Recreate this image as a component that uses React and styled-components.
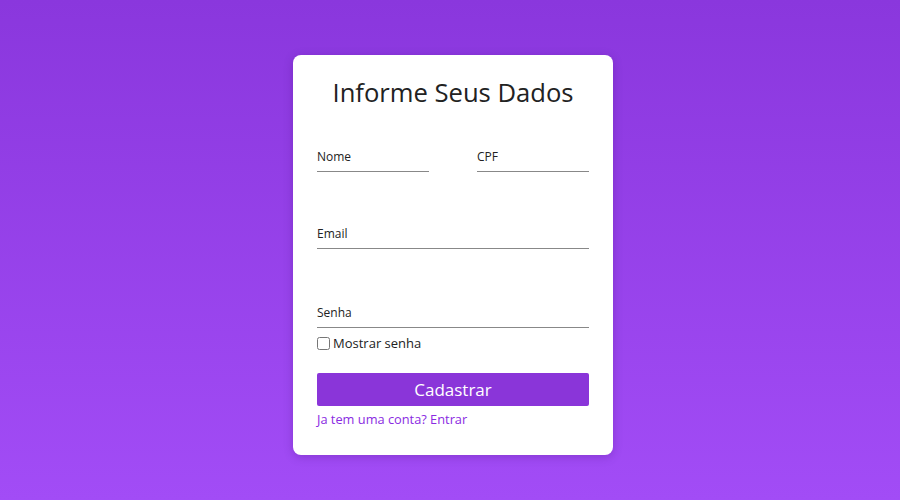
import React, { useState } from "react";
import styled, { createGlobalStyle } from "styled-components";

const GlobalStyle = createGlobalStyle`
  html, body {
    margin: 0;
    height: 100%;
  }
  body {
    font-family: "Open Sans", "Noto Sans", sans-serif;
    background: linear-gradient(180deg, #8a37dd 0%, #a24cf6 100%);
  }
  #root {
    height: 100%;
  }
`;

const Page = styled.div`
  height: 100%;
  box-sizing: border-box;
  padding: 10px 0 0 6px;
  display: flex;
  align-items: center;
  justify-content: center;
`;

const Card = styled.form`
  width: 320px;
  height: 400px;
  box-sizing: border-box;
  background: #fff;
  border-radius: 8px;
  padding: 20px 24px 0;
  box-shadow: 0 2px 10px rgba(60, 0, 110, 0.25);
`;

const Title = styled.h1`
  margin: 0;
  font-size: 25.6px;
  font-weight: 400;
  color: #222;
  text-align: center;
  line-height: 36px;
`;

const Row = styled.div`
  display: flex;
  gap: 48px;
  margin-top: ${(p) => p.top}px;
`;

const Input = styled.input`
  width: 100%;
  min-width: 0;
  box-sizing: border-box;
  border: none;
  border-bottom: 1px solid #888;
  outline: none;
  padding: 0 0 6px;
  font-family: inherit;
  font-size: 12px;
  color: #222;
  background: transparent;

  &::placeholder {
    color: #222;
  }
`;

const CheckLabel = styled.label`
  display: flex;
  align-items: center;
  gap: 3px;
  margin-top: 6px;
  font-size: 13px;
  color: #222;

  input {
    margin: 0;
    width: 13px;
    height: 13px;
  }
`;

const Button = styled.button`
  display: block;
  width: 100%;
  height: 33px;
  margin-top: 21px;
  border: none;
  border-radius: 2px;
  background: #8a35d9;
  color: #fff;
  font-family: inherit;
  font-size: 17px;
  cursor: pointer;
`;

const LoginLink = styled.a`
  display: inline-block;
  margin-top: 4px;
  font-size: 12.8px;
  color: #8a2be2;
  text-decoration: none;
`;

export default function App() {
  const [show, setShow] = useState(false);
  return (
    <Page>
      <GlobalStyle />
      <Card onSubmit={(e) => e.preventDefault()}>
        <Title>Informe Seus Dados</Title>
        <Row top={37}>
          <Input placeholder="Nome" />
          <Input placeholder="CPF" />
        </Row>
        <Row top={53}>
          <Input placeholder="Email" />
        </Row>
        <Row top={55}>
          <Input placeholder="Senha" type={show ? "text" : "password"} />
        </Row>
        <CheckLabel>
          <input
            type="checkbox"
            checked={show}
            onChange={(e) => setShow(e.target.checked)}
          />
          Mostrar senha
        </CheckLabel>
        <Button type="submit">Cadastrar</Button>
        <LoginLink href="#">Ja tem uma conta? Entrar</LoginLink>
      </Card>
    </Page>
  );
}
